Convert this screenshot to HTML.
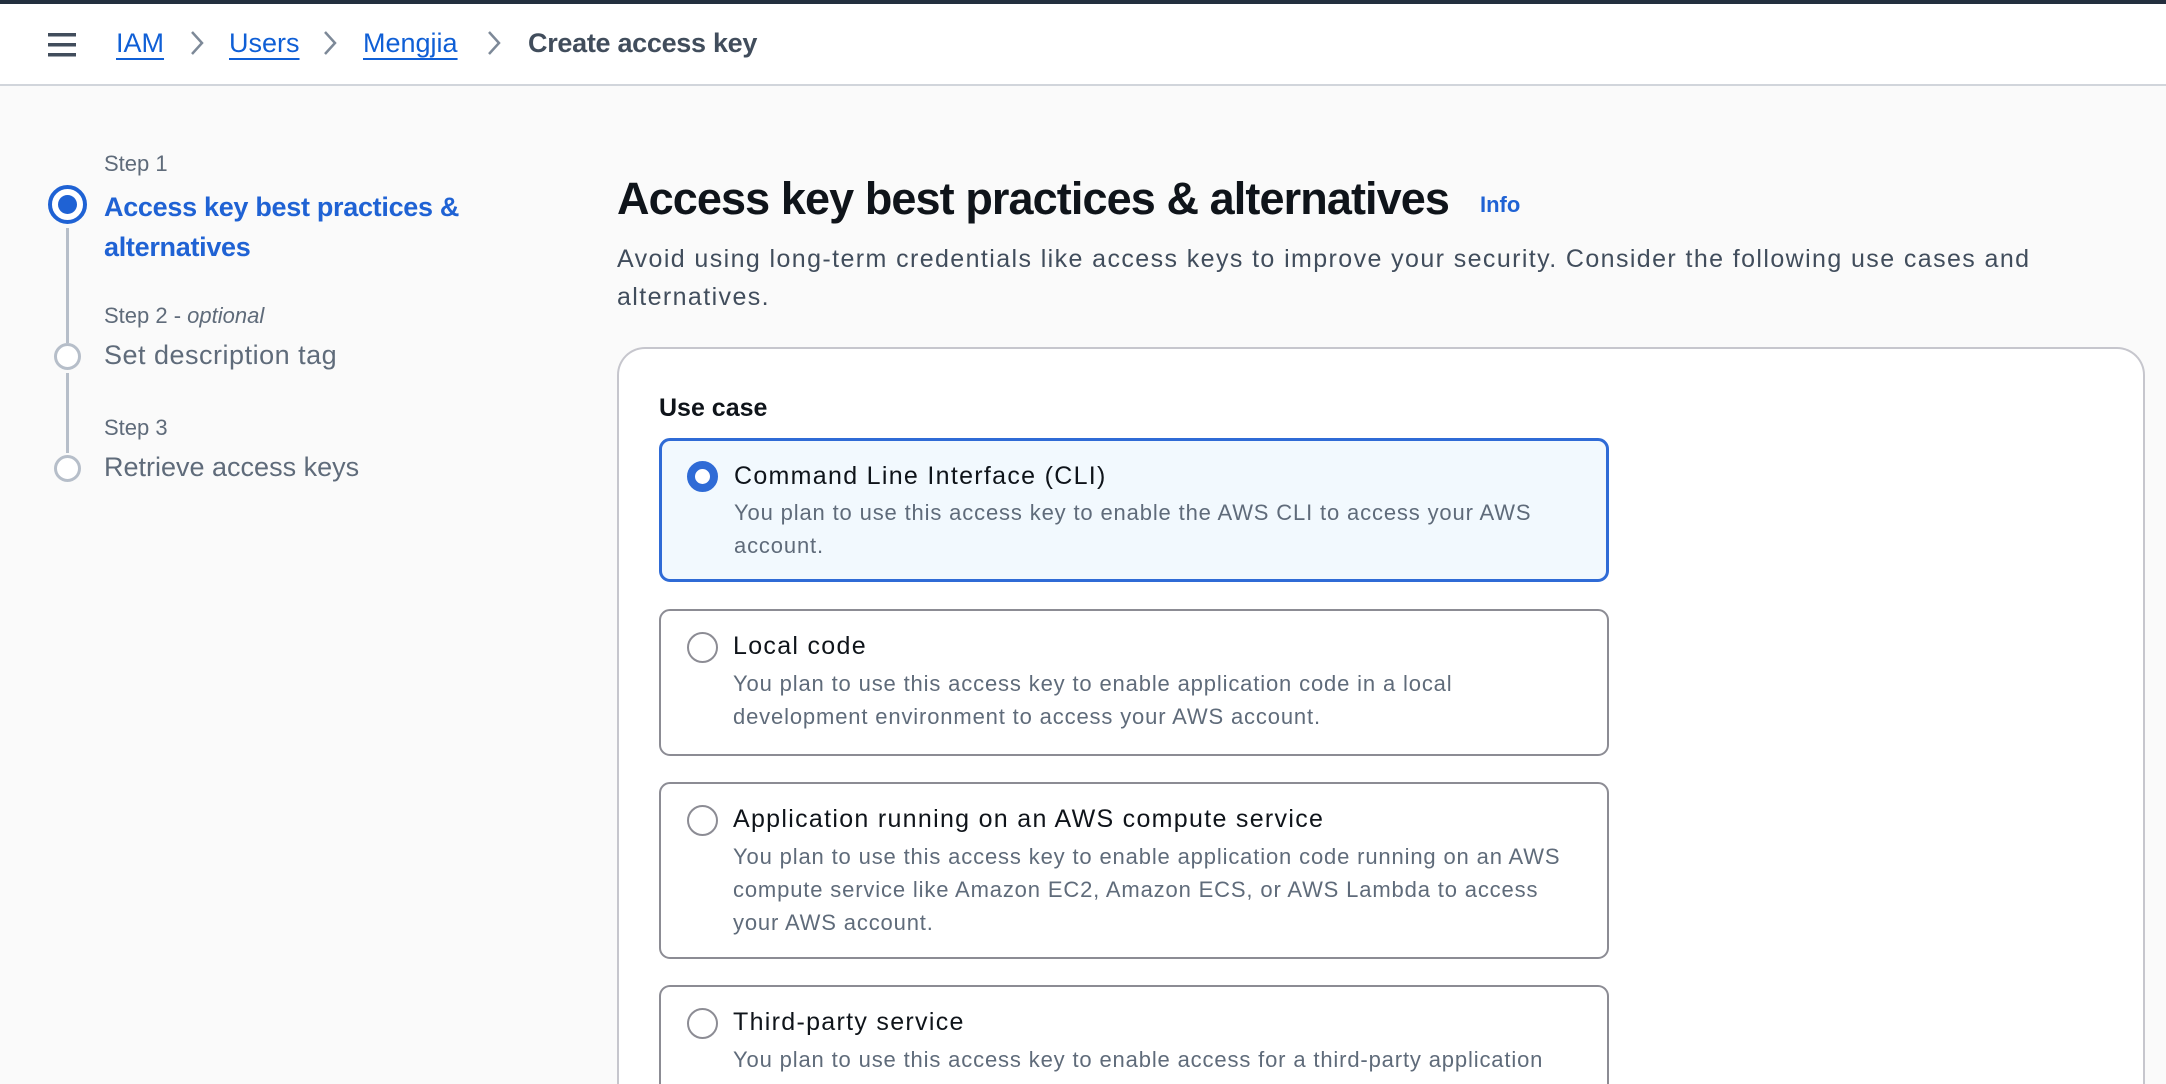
<!DOCTYPE html>
<html style="width:2166px;height:1084px;overflow:hidden"><head><meta charset="utf-8"><style>
*{margin:0;padding:0;box-sizing:border-box}
body{width:2166px;height:1084px;overflow:hidden;background:#fafafa;font-family:"Liberation Sans",sans-serif;position:relative}
#w{position:absolute;left:0;top:0;width:2166px;height:1084px;overflow:hidden}
.a{position:absolute;white-space:nowrap}
.top{position:absolute;left:0;top:0;width:2166px;height:4px;background:#232f3e}
.hdr{position:absolute;left:0;top:4px;width:2166px;height:82px;background:#fff;border-bottom:2px solid #d1d5db}
.bc{font-size:27px;top:28px;color:#0f5fd6;text-decoration:underline;text-underline-offset:6px;text-decoration-thickness:2px}
.chev{top:30px;width:14px;height:26px}
.step{font-size:22px;color:#5f6b7a;left:104px}
.sl{font-size:27px;color:#5f6b7a;left:104px;letter-spacing:0.5px}
.vl{position:absolute;left:66px;width:3px;background:#b6bec9}
.circ{position:absolute;border-radius:50%;background:#fff}
.card{position:absolute;left:659px;width:950px;border:2px solid #8c8c94;border-radius:11px;background:#fff}
.rad{position:absolute;left:26px;width:31px;height:31px;border-radius:50%;border:2px solid #8c8c94;background:#fff}
.t{position:absolute;left:72px;font-size:25px;color:#0f141a;white-space:nowrap;letter-spacing:1.3px}
.d{position:absolute;left:72px;font-size:22px;color:#5f6b7a;line-height:33px;white-space:nowrap;letter-spacing:0.85px}
</style></head><body><div id="w">
<div class="top"></div>
<div class="hdr"></div>
<svg class="a" style="left:48px;top:33px" width="28" height="24"><rect y="0" width="28" height="3.5" fill="#414d5c"/><rect y="10" width="28" height="3.5" fill="#414d5c"/><rect y="20" width="28" height="3.5" fill="#414d5c"/></svg>
<div class="a bc" style="left:116px">IAM</div>
<svg class="a chev" style="left:190px" viewBox="0 0 14 26"><path d="M2 2l10 11L2 24" stroke="#7d8998" stroke-width="2.5" fill="none"/></svg>
<div class="a bc" style="left:229px">Users</div>
<svg class="a chev" style="left:323px" viewBox="0 0 14 26"><path d="M2 2l10 11L2 24" stroke="#7d8998" stroke-width="2.5" fill="none"/></svg>
<div class="a bc" style="left:363px">Mengjia</div>
<svg class="a chev" style="left:487px" viewBox="0 0 14 26"><path d="M2 2l10 11L2 24" stroke="#7d8998" stroke-width="2.5" fill="none"/></svg>
<div class="a" style="left:528px;top:28px;font-size:27px;color:#414d5c;font-weight:bold;letter-spacing:-0.3px">Create access key</div>

<div class="a step" style="top:151px">Step 1</div>
<div class="a" style="left:104px;top:187px;font-size:27px;font-weight:bold;color:#1f62d4;line-height:40px;letter-spacing:-0.3px">Access key best practices &amp;<br>alternatives</div>
<div class="circ" style="left:48px;top:185px;width:39px;height:39px;border:4px solid #1f62d4"><div style="position:absolute;left:6px;top:6px;width:19px;height:19px;border-radius:50%;background:#1f62d4"></div></div>
<div class="vl" style="top:228px;height:115px"></div>
<div class="a step" style="top:303px">Step 2 - <i>optional</i></div>
<div class="a sl" style="top:340px">Set description tag</div>
<div class="circ" style="left:54px;top:343px;width:27px;height:27px;border:3px solid #b6bec9"></div>
<div class="vl" style="top:373px;height:80px"></div>
<div class="a step" style="top:415px">Step 3</div>
<div class="a sl" style="top:452px;letter-spacing:0">Retrieve access keys</div>
<div class="circ" style="left:54px;top:455px;width:27px;height:27px;border:3px solid #b6bec9"></div>

<div class="a" style="left:617px;top:173px;font-size:45px;font-weight:bold;color:#0f141a;letter-spacing:-0.9px">Access key best practices &amp; alternatives</div>
<div class="a" style="left:1480px;top:192px;font-size:22px;font-weight:bold;color:#1f62d4">Info</div>
<div class="a" style="left:617px;top:240px;font-size:25px;color:#414d5c;line-height:38px;letter-spacing:1.4px">Avoid using long-term credentials like access keys to improve your security. Consider the following use cases and<br>alternatives.</div>

<div style="position:absolute;left:617px;top:347px;width:1528px;height:767px;background:#fff;border:2px solid #c6c6cd;border-bottom:none;border-radius:28px 28px 0 0"></div>
<div class="a" style="left:659px;top:394px;font-size:25px;font-weight:bold;color:#0f141a">Use case</div>

<div class="card" style="top:438px;height:144px;border:3px solid #2f6bd6;background:#f2f9fe">
<div class="rad" style="left:25px;top:20px;border:8px solid #2f6bd6"></div>
<div class="t" style="top:21px">Command Line Interface (CLI)</div>
<div class="d" style="top:55px">You plan to use this access key to enable the AWS CLI to access your AWS<br>account.</div>
</div>
<div class="card" style="top:609px;height:147px">
<div class="rad" style="top:21px"></div>
<div class="t" style="top:21px">Local code</div>
<div class="d" style="top:56px">You plan to use this access key to enable application code in a local<br>development environment to access your AWS account.</div>
</div>
<div class="card" style="top:782px;height:177px">
<div class="rad" style="top:21px"></div>
<div class="t" style="top:21px">Application running on an AWS compute service</div>
<div class="d" style="top:56px">You plan to use this access key to enable application code running on an AWS<br>compute service like Amazon EC2, Amazon ECS, or AWS Lambda to access<br>your AWS account.</div>
</div>
<div class="card" style="top:985px;height:99px;border-bottom:none;border-radius:11px 11px 0 0;overflow:hidden">
<div class="rad" style="top:21px"></div>
<div class="t" style="top:21px">Third-party service</div>
<div class="d" style="top:56px">You plan to use this access key to enable access for a third-party application<br>or service that monitors or manages your AWS resources.</div>
</div>
</div></body></html>
